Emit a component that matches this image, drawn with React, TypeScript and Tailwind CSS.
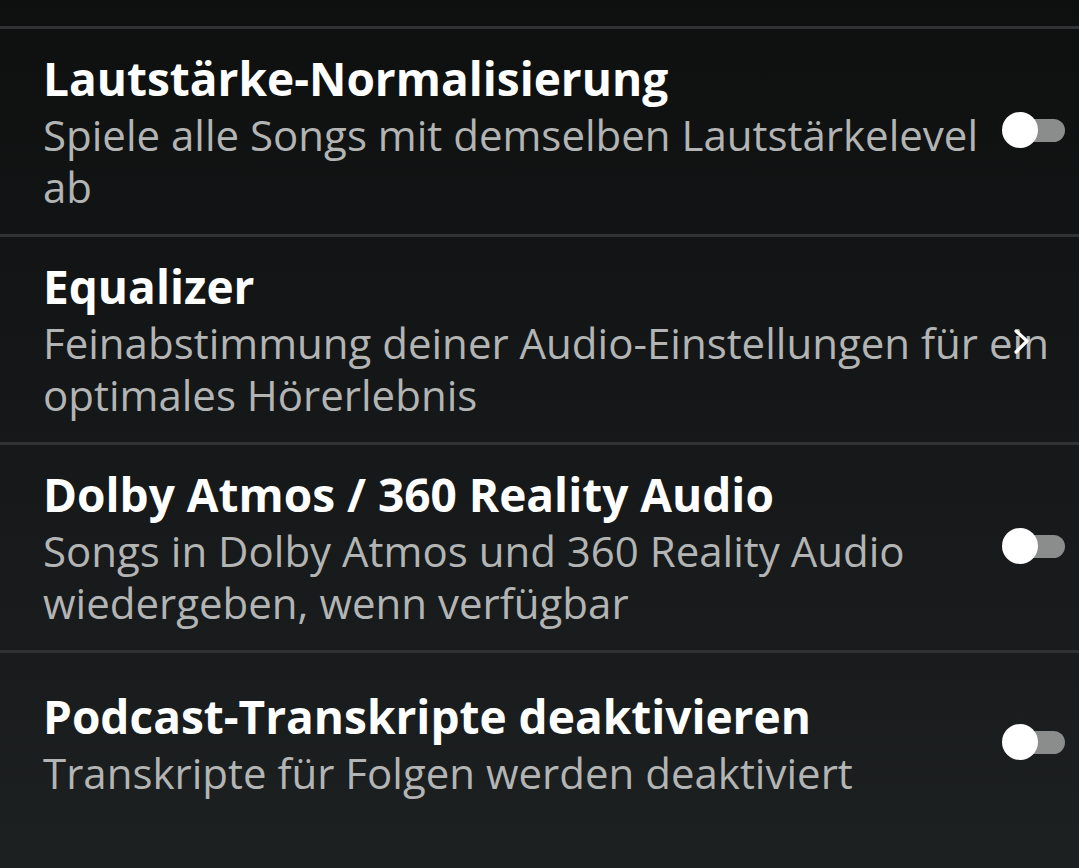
import React from "react"

type Row = {
  title: string
  subtitle: string
  kind: "toggle" | "link"
}

const rows: Row[] = [
  {
    title: "Lautstärke-Normalisierung",
    subtitle: "Spiele alle Songs mit demselben Lautstärkelevel ab",
    kind: "toggle",
  },
  {
    title: "Equalizer",
    subtitle: "Feinabstimmung deiner Audio-Einstellungen für ein optimales Hörerlebnis",
    kind: "link",
  },
  {
    title: "Dolby Atmos / 360 Reality Audio",
    subtitle: "Songs in Dolby Atmos und 360 Reality Audio wiedergeben, wenn verfügbar",
    kind: "toggle",
  },
  {
    title: "Podcast-Transkripte deaktivieren",
    subtitle: "Transkripte für Folgen werden deaktiviert",
    kind: "toggle",
  },
]

function Toggle() {
  return (
    <div className="relative h-[36px] w-[64px] shrink-0">
      <div className="absolute left-[22px] top-[7px] h-[23px] w-[41px] rounded-full bg-[#8b8c8c]" />
      <div className="absolute left-0 top-0 h-[36px] w-[36px] rounded-full bg-white" />
    </div>
  )
}

function Chevron() {
  return (
    <svg className="absolute right-[49px] top-[92px]" width="16" height="26" viewBox="0 0 16 26" fill="none">
      <polyline points="2,2 13,12 2,23" stroke="#ffffff" strokeWidth="3.2" strokeLinecap="round" strokeLinejoin="round" />
    </svg>
  )
}

function SettingRow({ row, last }: { row: Row; last?: boolean }) {
  return (
    <div
      className={`relative flex items-center border-t-[3px] border-[#303233] pl-[43px] ${
        last ? "pt-[32px] pb-[60px]" : "h-[208px] pt-[18px] pb-[21px]"
      } ${row.kind === "toggle" ? "pr-[13px]" : "pr-[8px]"}`}
    >
      <div className={`flex min-w-0 flex-1 flex-col ${row.kind === "toggle" ? "pr-[12px]" : ""}`}>
        <div className="text-[46px] font-bold leading-[62px] text-white">{row.title}</div>
        <div className="text-[42px] leading-[52px] text-[#b3b4b4]">{row.subtitle}</div>
      </div>
      {row.kind === "toggle" ? <Toggle /> : <Chevron />}
    </div>
  )
}

export default function App() {
  return (
    <div
      className="min-h-screen w-full overflow-hidden bg-gradient-to-b from-[#0e1010] to-[#1d2021] pt-[26px]"
      style={{ fontFamily: '"Open Sans", "Noto Sans", sans-serif' }}
    >
      {rows.map((row, i) => (
        <SettingRow key={row.title} row={row} last={i === rows.length - 1} />
      ))}
    </div>
  )
}
